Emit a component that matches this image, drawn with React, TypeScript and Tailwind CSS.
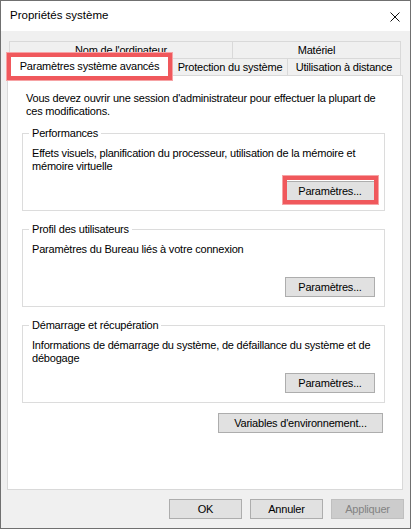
function Btn({ label, w = "w-[90px]", disabled = false }: { label: string; w?: string; disabled?: boolean }) {
  return (
    <button
      type="button"
      className={
        disabled
          ? `${w} h-[20px] border border-[#bfbfbf] bg-[#cccccc] text-[#838383] leading-none whitespace-nowrap`
          : `${w} h-[20px] border border-[#adadad] bg-[#e1e1e1] text-black leading-none whitespace-nowrap`
      }
    >
      {label}
    </button>
  );
}

function Group({ title, children, button }: { title: string; children: React.ReactNode; button: React.ReactNode }) {
  return (
    <fieldset className="border border-[#dcdcdc] px-[9px] pb-[9px] pt-[7px]">
      <legend className="-ml-[3px] px-[3px] leading-[13px]">{title}</legend>
      <div className="min-h-[26px] leading-[13px]">{children}</div>
      <div className="mt-[8px] flex justify-end">{button}</div>
    </fieldset>
  );
}

export default function App() {
  return (
    <div className="w-[411px] h-[529px] border border-[#707070] bg-[#f0f0f0] flex flex-col text-[11px] tracking-[-0.2px] text-black font-['Liberation_Sans',Arial,sans-serif]">
      {/* title bar */}
      <div className="h-[30px] bg-white flex items-center justify-between pl-[9px] pr-[10px]">
        <span className="text-[11.5px] tracking-normal">Propriétés système</span>
        <svg width="10" height="10" viewBox="0 0 10 10" className="mt-[1px]">
          <path d="M0.5 0.5 L9.5 9.5 M9.5 0.5 L0.5 9.5" stroke="#111" strokeWidth="1" fill="none" />
        </svg>
      </div>

      {/* tabs */}
      <div className="ml-[6px] mr-[7px] pt-[10px] whitespace-nowrap">
        <div className="flex pl-[2px] h-[17px]">
          <div className="w-[223px] border-t border-l border-[#d9d9d9] flex items-center justify-center">Nom de l'ordinateur</div>
          <div className="w-[169px] border-t border-l border-r border-[#d9d9d9] flex items-center justify-center">Matériel</div>
        </div>
        <div className="flex h-[17px] items-end">
          <div className="relative z-10 w-[165px] h-[21px] -mb-px bg-white border-t border-l border-r border-[#d9d9d9] flex items-center justify-center pt-[1px]">
            Paramètres système avancés
            <div className="absolute -left-px -right-px -top-[3px] -bottom-[4px] border-[4px] border-[#f0585c] shadow-[0_0_0_1px_#f6a3a5]" />
          </div>
          <div className="w-[115px] h-[17px] border-t border-l border-[#d9d9d9] flex items-center justify-center">Protection du système</div>
          <div className="w-[114px] h-[17px] border-t border-l border-r border-[#d9d9d9] flex items-center justify-center">Utilisation à distance</div>
        </div>
      </div>

      {/* panel */}
      <div className="ml-[6px] mr-[7px] flex-1 bg-white border border-[#d9d9d9] pt-[16px] pl-[14px] pr-[17px]">
        <p className="pl-[4px] leading-[13px]">
          Vous devez ouvrir une session d'administrateur pour effectuer la plupart de ces modifications.
        </p>

        <div className="mt-[9px] flex flex-col gap-[12px]">
          <Group
            title="Performances"
            button={
              <span className="relative">
                <Btn label="Paramètres..." />
                <span className="absolute -left-[2px] -right-[3px] -top-[5px] -bottom-[3px] border-[4px] border-[#f0585c] shadow-[0_0_0_1px_#f6a3a5]" />
              </span>
            }
          >
            Effets visuels, planification du processeur, utilisation de la mémoire et mémoire virtuelle
          </Group>
          <Group title="Profil des utilisateurs" button={<Btn label="Paramètres..." />}>
            Paramètres du Bureau liés à votre connexion
          </Group>
          <Group title="Démarrage et récupération" button={<Btn label="Paramètres..." />}>
            Informations de démarrage du système, de défaillance du système et de débogage
          </Group>
        </div>

        <div className="mt-[10px] flex justify-end pr-[2px]">
          <Btn label="Variables d'environnement..." w="w-[165px]" />
        </div>
      </div>

      {/* footer */}
      <div className="h-[38px] flex items-center justify-end gap-[8px] pr-[6px]">
        <Btn label="OK" w="w-[73px]" />
        <Btn label="Annuler" w="w-[73px]" />
        <Btn label="Appliquer" w="w-[73px]" disabled />
      </div>
    </div>
  );
}
